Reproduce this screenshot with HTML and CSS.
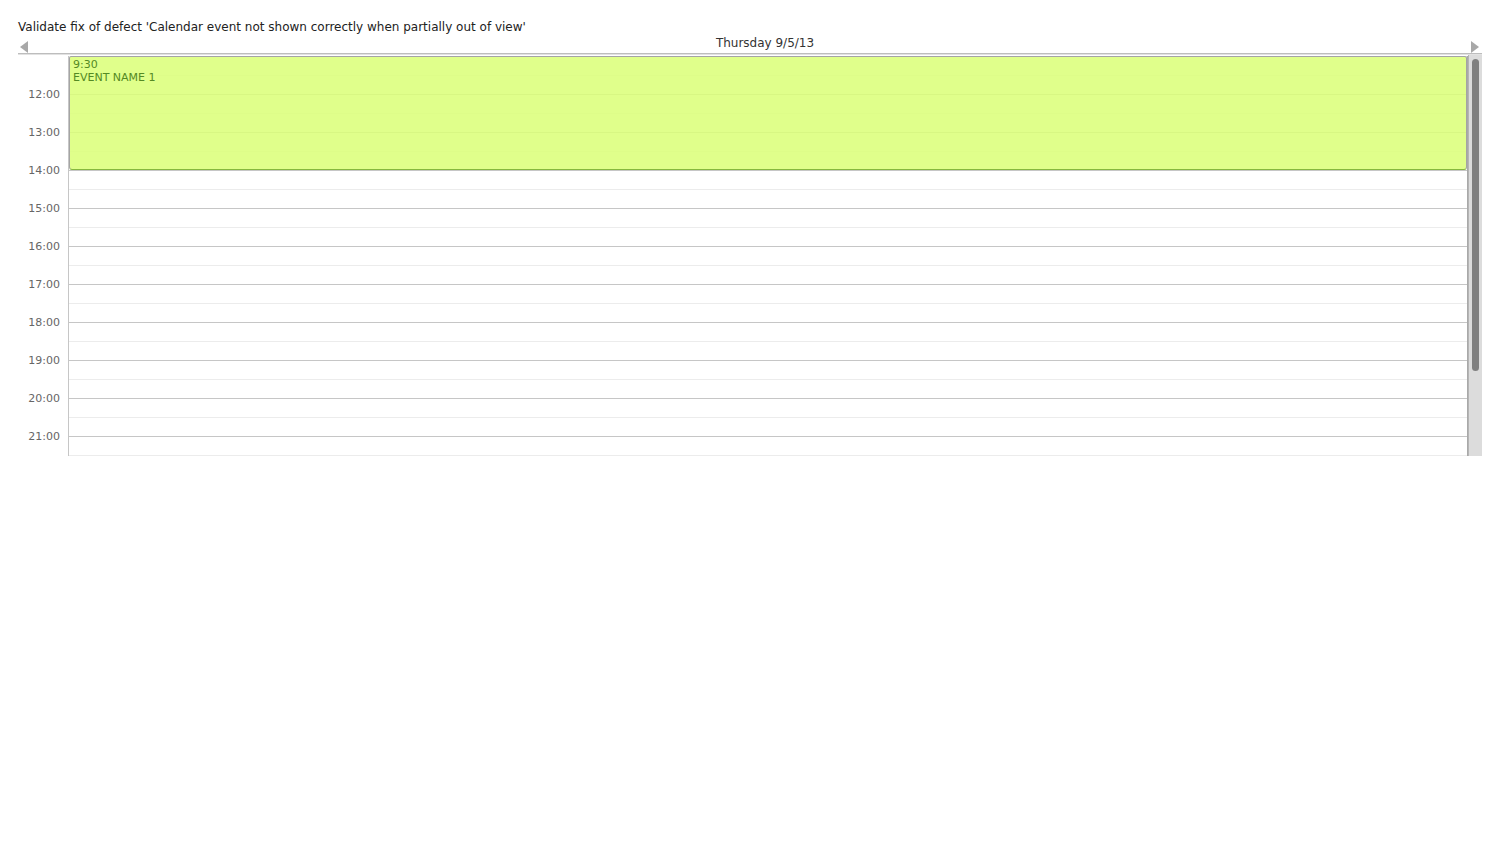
FILE: index.html
```html
<!DOCTYPE html>
<html>
<head>
<meta charset="utf-8">
<link rel="stylesheet" href="styles.css">
</head>
<body>
<div class="page">
  <div class="title">Validate fix of defect 'Calendar event not shown correctly when partially out of view'</div>
  <div class="cal">
    <div class="cal-head">
      <span class="arrow arrow-left"></span>
      <span class="day">Thursday 9/5/13</span>
      <span class="arrow arrow-right"></span>
    </div>
    <div class="cal-body">
      <div class="view">
        <div class="times">
          <div class="hour"></div>
          <div class="hour"><span class="lbl">12:00</span></div>
          <div class="hour"><span class="lbl">13:00</span></div>
          <div class="hour"><span class="lbl">14:00</span></div>
          <div class="hour"><span class="lbl">15:00</span></div>
          <div class="hour"><span class="lbl">16:00</span></div>
          <div class="hour"><span class="lbl">17:00</span></div>
          <div class="hour"><span class="lbl">18:00</span></div>
          <div class="hour"><span class="lbl">19:00</span></div>
          <div class="hour"><span class="lbl">20:00</span></div>
          <div class="hour"><span class="lbl">21:00</span></div>
        </div>
        <div class="grid">
          <div class="slot"></div>
          <div class="slot"></div>
          <div class="slot"></div>
          <div class="slot"></div>
          <div class="slot"></div>
          <div class="slot"></div>
          <div class="slot"></div>
          <div class="slot"></div>
          <div class="slot"></div>
          <div class="slot"></div>
          <div class="slot"></div>
          <div class="event">
            <div class="ev-time">9:30</div>
            <div class="ev-name">EVENT NAME 1</div>
          </div>
        </div>
      </div>
      <div class="scrollbar"><div class="thumb"></div></div>
    </div>
  </div>
</div>
</body>
</html>
```

FILE: styles.css
```css
html, body {
  margin: 0;
  padding: 0;
  background: #fff;
}
body {
  font-family: "DejaVu Sans", sans-serif;
  color: #222;
}
.page {
  padding: 19px 18px 0 18px;
}
.title {
  font-size: 12px;
  line-height: 16px;
  color: #222;
}
.cal-head {
  position: relative;
  height: 18px;
  padding: 0 20px 0 50px;
  border-bottom: 1px solid #bdbdbd;
  box-shadow: 0 1px 0 #e2e2e2;
  text-align: center;
  font-size: 12px;
  line-height: 16px;
}
.day {
  color: #333;
}
.arrow {
  position: absolute;
  top: 6px;
  width: 0;
  height: 0;
  border-top: 6px solid transparent;
  border-bottom: 6px solid transparent;
}
.arrow-left {
  left: 2px;
  border-right: 8px solid #a8a8a8;
}
.arrow-right {
  right: 3px;
  border-left: 8px solid #a8a8a8;
}
.cal-body {
  display: flex;
  height: 401px;
  margin-top: 1px;
  overflow: hidden;
}
.view {
  flex: 1;
  display: flex;
  padding-top: 1px;
  overflow: hidden;
}
.times {
  width: 50px;
  flex: none;
  border-right: 1px solid #c6c6c6;
}
.hour {
  position: relative;
  height: 38px;
}
.lbl {
  position: absolute;
  right: 8px;
  top: -6px;
  font-size: 11px;
  line-height: 14px;
  color: #666;
}
.grid {
  position: relative;
  flex: 1;
  border-right: 1px solid #a9a9a9;
}
.slot {
  height: 38px;
  box-sizing: border-box;
  border-top: 1px solid #c6c6c6;
  background: linear-gradient(to bottom, transparent 18px, #ececec 18px, #ececec 19px, transparent 19px);
}
.slot:first-child {
  border-top-color: transparent;
}
.event {
  position: absolute;
  left: 0;
  right: 0;
  top: 0;
  height: 114px;
  box-sizing: border-box;
  background: rgba(219, 255, 120, 0.86);
  border: 1px solid #a4a4a4;
  border-bottom: 1px solid #86b83e;
  border-radius: 2px 2px 3px 3px;
  padding: 1px 3px;
  color: #548a24;
  font-size: 11px;
  line-height: 13px;
}
.scrollbar {
  width: 13px;
  flex: none;
  background: #dcdcdc;
  position: relative;
  border-left: 1px solid #b5b5b5;
}
.thumb {
  position: absolute;
  left: 3px;
  top: 4px;
  width: 7px;
  height: 312px;
  border-radius: 4px;
  background: #808080;
}
```
